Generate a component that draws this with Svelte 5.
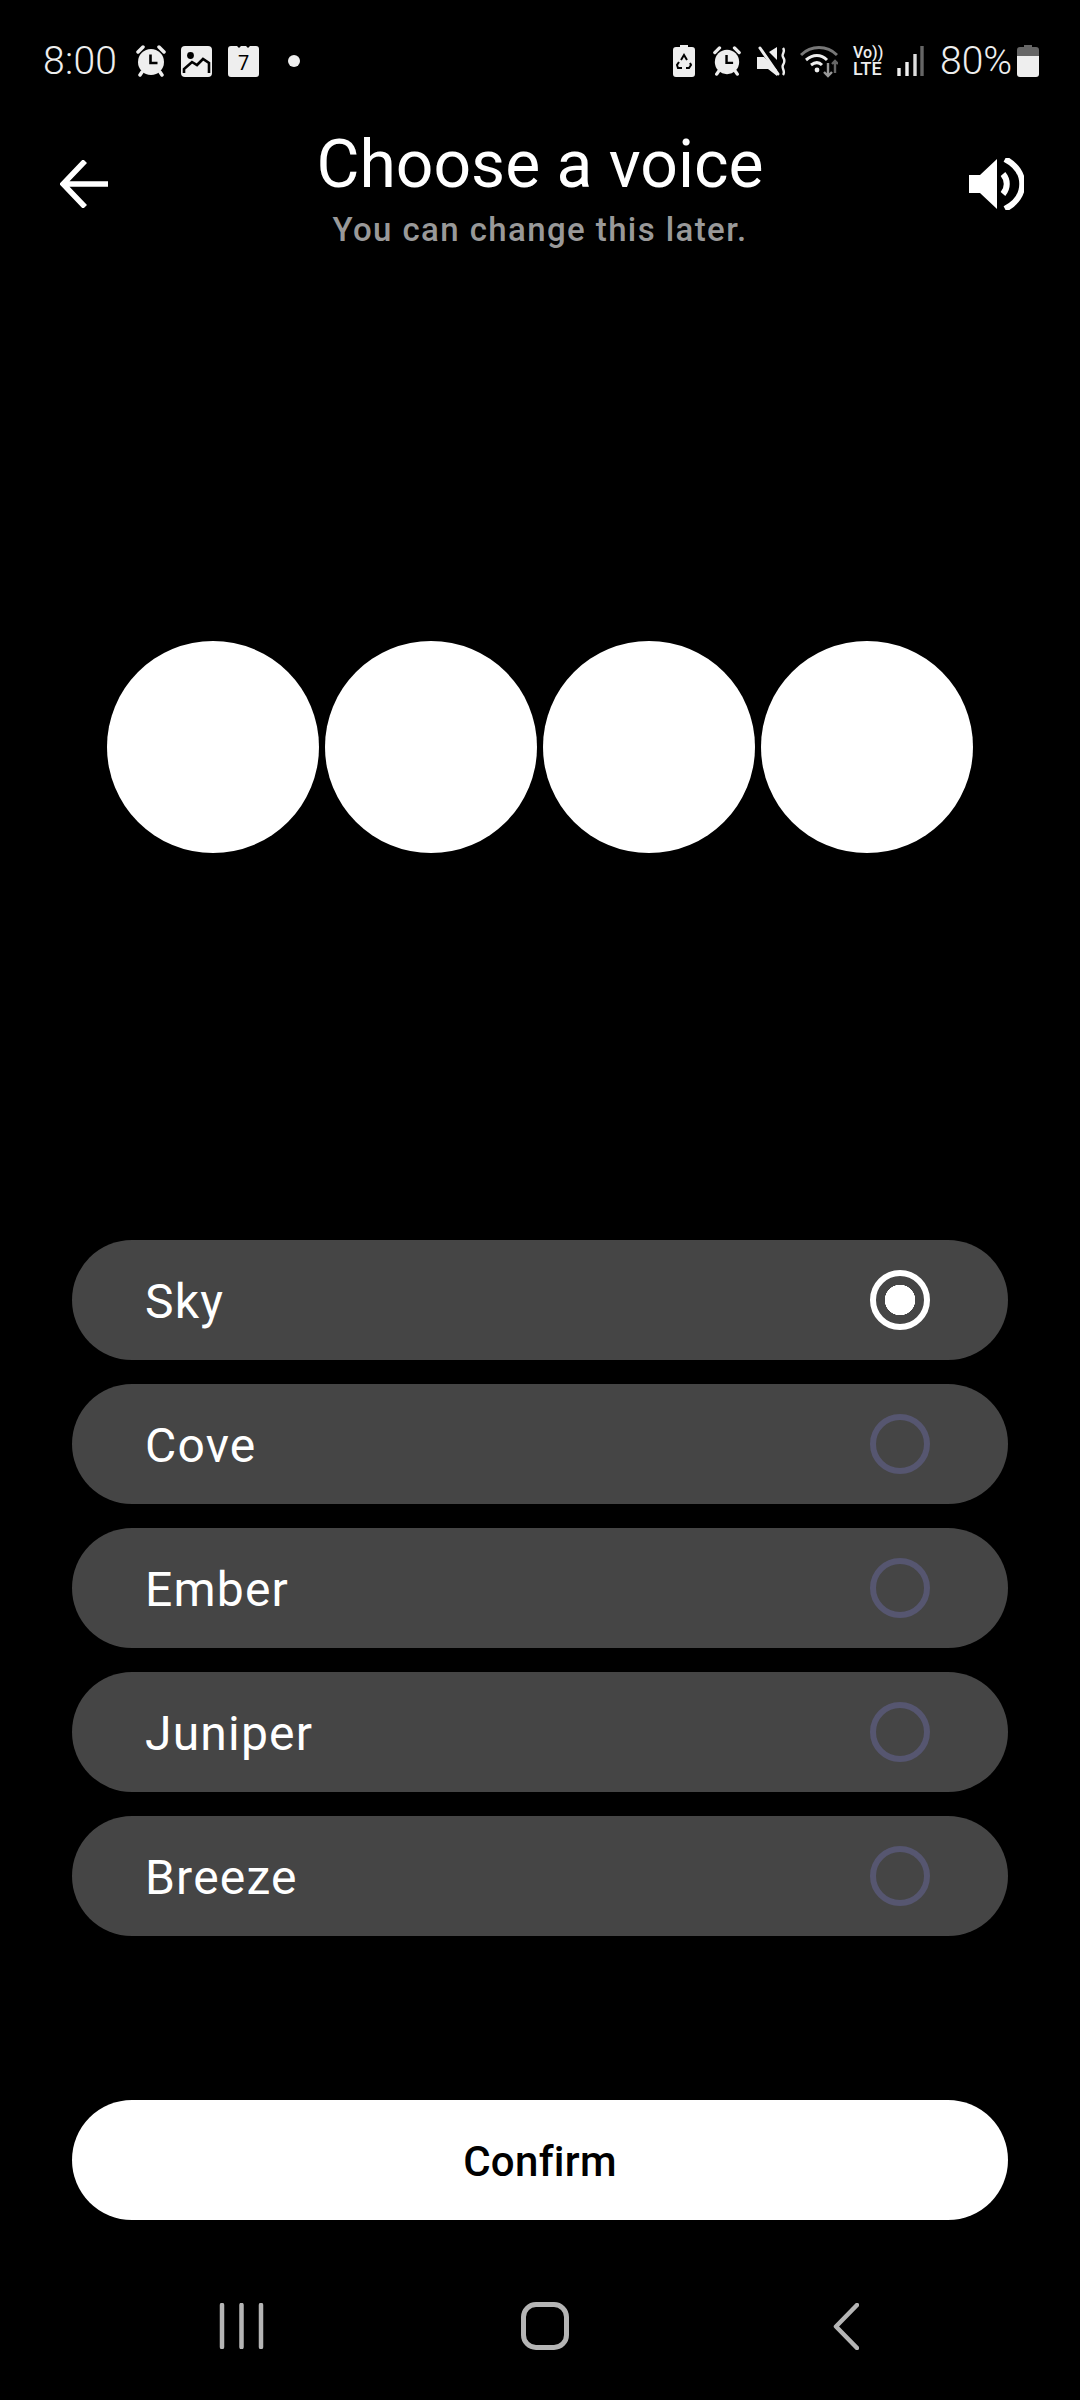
<script lang="ts">
  const voices = ['Sky', 'Cove', 'Ember', 'Juniper', 'Breeze'];
  let selected = $state('Sky');
</script>

<div class="screen">
  <div class="status">
    <div class="status-left">
      <span class="time">8:00</span>
      <svg class="ic alarm-l" viewBox="0 0 32 32">
        <path d="M3 7l5-5M29 7l-5-5" stroke="#eee" stroke-width="3.500" stroke-linecap="round" />
        <path d="M7 27l-2 3M25 27l2 3" stroke="#eee" stroke-width="3.500" stroke-linecap="round" />
        <circle cx="16" cy="17" r="13" fill="#eee" />
        <path d="M15.500 9.500v8.500h7" fill="none" stroke="#000" stroke-width="2.600" />
      </svg>
      <svg class="ic picture" viewBox="0 0 31 31">
        <rect width="31" height="31" rx="4" fill="#eee" />
        <circle cx="9.500" cy="9.500" r="3.400" fill="#000" />
        <path d="M3 27v-4l8-7 5 3 6-6 6 4v10" fill="none" stroke="#000" stroke-width="2.600" />
      </svg>
      <svg class="ic cal" viewBox="0 0 31 31">
        <path d="M3 0h6l2 2 2-2h5l2 2 2-2h6a3 3 0 0 1 3 3v25a3 3 0 0 1-3 3H3a3 3 0 0 1-3-3V3a3 3 0 0 1 3-3z" fill="#eee" />
        <text x="15.500" y="24" text-anchor="middle" class="cal-day">7</text>
      </svg>
      <span class="dot"></span>
    </div>
    <div class="status-right">
      <svg class="ic batt-s" viewBox="0 0 22 32">
        <path d="M7 0h8v2h4a3 3 0 0 1 3 3v24a3 3 0 0 1-3 3H3a3 3 0 0 1-3-3V5a3 3 0 0 1 3-3h4z" fill="#eee" />
        <path d="M8 15l3-5 3 5M17 18l1 2-2 3h-3M9 23H5l-1-3 2-3" fill="none" stroke="#000" stroke-width="2" />
      </svg>
      <svg class="ic alarm-r" viewBox="0 0 32 32">
        <path d="M3 7l5-5M29 7l-5-5" stroke="#eee" stroke-width="3.500" stroke-linecap="round" />
        <path d="M7 27l-2 3M25 27l2 3" stroke="#eee" stroke-width="3.500" stroke-linecap="round" />
        <circle cx="16" cy="17" r="13" fill="#eee" />
        <path d="M15.500 9.500v8.500h7" fill="none" stroke="#000" stroke-width="2.600" />
      </svg>
      <svg class="ic mute" viewBox="0 0 30 31">
        <path d="M0 11h6l1 0 13 13v6l-9-7H0zM12 6l8-5v13z" fill="#eee" />
        <path d="M3 2l18 26" stroke="#eee" stroke-width="3" stroke-linecap="round" />
        <path d="M26 2c3 4-2 6 0 9s2 5 0 8 3 6 0 10" fill="none" stroke="#eee" stroke-width="2.400" />
      </svg>
      <svg class="ic wifi" viewBox="0 0 38 34">
        <path d="M1 11c10-10 26-10 36 0" fill="none" stroke="#777" stroke-width="3" />
        <path d="M6 16c7-6 15-6 21 0" fill="none" stroke="#eee" stroke-width="3" />
        <path d="M11 21c4-3 8-3 11 0" fill="none" stroke="#eee" stroke-width="3" />
        <circle cx="17" cy="26" r="2.400" fill="#eee" />
        <path d="M28 19v13M24 28l4 4 4-4" fill="none" stroke="#999" stroke-width="2.400" />
        <path d="M35 29V17M32 20l3-3 3 3" fill="none" stroke="#666" stroke-width="2.400" />
      </svg>
      <span class="volte"><span>Vo))</span><span class="lte">LTE</span></span>
      <svg class="ic signal" viewBox="0 0 27 30">
        <path d="M2 22v8M10 16v14" stroke="#eee" stroke-width="3.400" />
        <path d="M18 8v22" stroke="#ddd" stroke-width="3.400" />
        <path d="M25 0v30" stroke="#666" stroke-width="3.400" />
      </svg>
      <span class="pct">80%</span>
      <svg class="ic battery" viewBox="0 0 22 32">
        <path d="M7 0h8v2h4a3 3 0 0 1 3 3v6H0V5a3 3 0 0 1 3-3h4z" fill="#666" />
        <path d="M0 11h22v18a3 3 0 0 1-3 3H3a3 3 0 0 1-3-3z" fill="#eee" />
      </svg>
    </div>
  </div>

  <header class="top">
    <svg class="back" viewBox="0 0 48 48">
      <path d="M48 24H4M25 1L3 24l22 23" fill="none" stroke="#fff" stroke-width="5.500" />
    </svg>
    <div class="titles">
      <h1>Choose a voice</h1>
      <p>You can change this later.</p>
    </div>
    <svg class="speaker" viewBox="0 0 55 52">
      <path d="M0 17h11L28 1v50L11 35H0z" fill="#fff" />
      <path d="M34 16c5 6 5 14 0 20" fill="none" stroke="#fff" stroke-width="6" />
      <path d="M36 1c23 12 23 38 0 50" fill="none" stroke="#fff" stroke-width="6" />
    </svg>
  </header>

  <div class="orbs">
    {#each [0, 1, 2, 3] as orb (orb)}
      <div class="orb"></div>
    {/each}
  </div>

  <div class="options">
    {#each voices as voice (voice)}
      <button type="button" class="option" onclick={() => (selected = voice)}>
        <span class="label">{voice}</span>
        <span class="radio" class:on={voice === selected}></span>
      </button>
    {/each}
  </div>

  <button type="button" class="confirm">Confirm</button>

  <nav class="nav">
    <svg class="recents" viewBox="0 0 45 46">
      <path d="M3 2v42M22.500 2v42M42 2v42" stroke="#b5b5b5" stroke-width="4.500" stroke-linecap="round" />
    </svg>
    <span class="home"></span>
    <svg class="prev" viewBox="0 0 26 47">
      <path d="M24 2L3 23.500 24 45" fill="none" stroke="#b5b5b5" stroke-width="4.500" stroke-linecap="round" stroke-linejoin="round" />
    </svg>
  </nav>
</div>

<style>
  :global(body) {
    margin: 0;
    background: #000;
  }

  .screen {
    width: 1080px;
    height: 2400px;
    background: #000;
    color: #fff;
    font-family: Roboto, 'Noto Sans', sans-serif;
    display: flex;
    flex-direction: column;
    overflow: hidden;
  }

  .status {
    height: 122px;
    flex: none;
    display: flex;
    align-items: center;
    justify-content: space-between;
    padding: 0 41px 0 43px;
    color: #eee;
  }

  .status-left,
  .status-right {
    display: flex;
    align-items: center;
  }

  .ic {
    display: block;
    flex: none;
  }

  .time {
    font-size: 39px;
    font-weight: 300;
    line-height: 46px;
    width: 92px;
    letter-spacing: 0.3px;
  }

  .alarm-l {
    width: 32px;
    height: 32px;
  }

  .picture {
    width: 31px;
    height: 31px;
    margin-left: 14px;
  }

  .cal {
    width: 31px;
    height: 31px;
    margin-left: 16px;
  }

  .cal-day {
    font-size: 20px;
    fill: #000;
  }

  .dot {
    width: 12px;
    height: 12px;
    margin-left: 29px;
    border-radius: 50%;
    background: #eee;
  }

  .batt-s {
    width: 22px;
    height: 32px;
  }

  .alarm-r {
    width: 30px;
    height: 30px;
    margin-left: 17px;
  }

  .mute {
    width: 30px;
    height: 31px;
    margin-left: 15px;
  }

  .wifi {
    width: 38px;
    height: 34px;
    margin-left: 13px;
  }

  .volte {
    display: flex;
    flex-direction: column;
    width: 31px;
    margin-left: 15px;
    font-size: 16px;
    line-height: 16px;
    font-weight: 500;
    white-space: nowrap;
  }

  .lte {
    font-size: 18px;
  }

  .signal {
    width: 27px;
    height: 30px;
    margin-left: 13px;
  }

  .pct {
    font-size: 39px;
    font-weight: 300;
    line-height: 46px;
    margin-left: 16px;
    width: 77px;
  }

  .battery {
    width: 22px;
    height: 32px;
  }

  .top {
    height: 128px;
    flex: none;
    display: flex;
    align-items: flex-start;
    justify-content: space-between;
    padding: 0 56px 0 60px;
  }

  .back {
    width: 48px;
    height: 48px;
    margin-top: 38px;
  }

  .speaker {
    width: 55px;
    height: 52px;
    margin-top: 36px;
  }

  .titles {
    text-align: center;
    padding: 7px 0 0 3px;
  }

  h1 {
    margin: 0;
    font-size: 66px;
    line-height: 72px;
    font-weight: 400;
  }

  .titles p {
    margin: 9px 0 0;
    font-size: 33px;
    font-weight: 500;
    line-height: 40px;
    letter-spacing: 1.4px;
    color: #999;
  }

  .orbs {
    display: flex;
    justify-content: center;
    gap: 6px;
    margin-top: 391px;
    flex: none;
  }

  .orb {
    width: 212px;
    height: 212px;
    border-radius: 50%;
    background: #fff;
  }

  .options {
    display: flex;
    flex-direction: column;
    gap: 24px;
    margin: 387px 72px 0;
    flex: none;
  }

  .option {
    height: 120px;
    border: none;
    border-radius: 60px;
    background: #454545;
    color: #fff;
    display: flex;
    align-items: center;
    justify-content: space-between;
    padding: 0 78px 0 73px;
    font-family: inherit;
    font-size: 48px;
    letter-spacing: 1.200px;
  }

  .label {
    margin-top: 3px;
  }

  .radio {
    width: 60px;
    height: 60px;
    box-sizing: border-box;
    border: 6px solid #565670;
    border-radius: 50%;
  }

  .radio.on {
    border-color: #fff;
    background: radial-gradient(circle, #fff 0 15px, transparent 15.500px);
  }

  .confirm {
    flex: none;
    height: 120px;
    margin: 164px 72px 0;
    padding: 3px 0 0;
    border: none;
    border-radius: 60px;
    background: #fff;
    color: #000;
    font-family: inherit;
    font-size: 42px;
    font-weight: 500;
    letter-spacing: 0.300px;
  }

  .nav {
    flex: none;
    display: grid;
    grid-template-columns: 45px 48px 26px;
    justify-content: space-between;
    align-items: center;
    margin: 82px 221px 0 219px;
    height: 48px;
  }

  .recents {
    width: 45px;
    height: 46px;
  }

  .home {
    width: 48px;
    height: 48px;
    margin-left: -4px;
    box-sizing: border-box;
    border: 5px solid #b5b5b5;
    border-radius: 15px;
  }

  .prev {
    width: 26px;
    height: 47px;
  }
</style>
